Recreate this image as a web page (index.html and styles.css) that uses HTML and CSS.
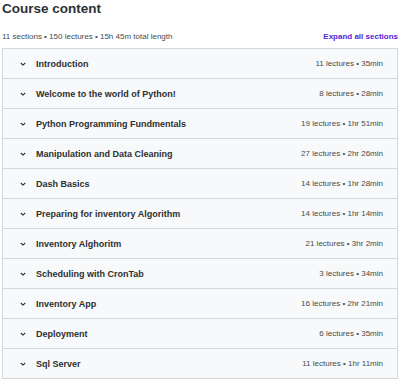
FILE: index.html
```html
<!DOCTYPE html>
<html lang="en">
<head>
<meta charset="UTF-8" />
<title>Course content</title>
<link rel="stylesheet" href="styles.css">
</head>
<body>
<main class="curriculum">
  <h2 class="title">Course content</h2>
  <div class="summary">
    <span>11 sections • 150 lectures • 15h 45m total length</span>
    <button class="expand" type="button">Expand all sections</button>
  </div>
  <div class="sections">
    <div class="section"><span class="chev"><svg width="8" height="8" viewBox="0 0 8 8"><path d="M1.8 3 4 5.1 6.2 3" /></svg></span><span class="name">Introduction</span><span class="meta">11 lectures • 35min</span></div>
    <div class="section"><span class="chev"><svg width="8" height="8" viewBox="0 0 8 8"><path d="M1.8 3 4 5.1 6.2 3" /></svg></span><span class="name">Welcome to the world of Python!</span><span class="meta">8 lectures • 28min</span></div>
    <div class="section"><span class="chev"><svg width="8" height="8" viewBox="0 0 8 8"><path d="M1.8 3 4 5.1 6.2 3" /></svg></span><span class="name">Python Programming Fundmentals</span><span class="meta">19 lectures • 1hr 51min</span></div>
    <div class="section"><span class="chev"><svg width="8" height="8" viewBox="0 0 8 8"><path d="M1.8 3 4 5.1 6.2 3" /></svg></span><span class="name">Manipulation and Data Cleaning</span><span class="meta">27 lectures • 2hr 26min</span></div>
    <div class="section"><span class="chev"><svg width="8" height="8" viewBox="0 0 8 8"><path d="M1.8 3 4 5.1 6.2 3" /></svg></span><span class="name">Dash Basics</span><span class="meta">14 lectures • 1hr 28min</span></div>
    <div class="section"><span class="chev"><svg width="8" height="8" viewBox="0 0 8 8"><path d="M1.8 3 4 5.1 6.2 3" /></svg></span><span class="name">Preparing for inventory Algorithm</span><span class="meta">14 lectures • 1hr 14min</span></div>
    <div class="section"><span class="chev"><svg width="8" height="8" viewBox="0 0 8 8"><path d="M1.8 3 4 5.1 6.2 3" /></svg></span><span class="name">Inventory Alghoritm</span><span class="meta">21 lectures • 3hr 2min</span></div>
    <div class="section"><span class="chev"><svg width="8" height="8" viewBox="0 0 8 8"><path d="M1.8 3 4 5.1 6.2 3" /></svg></span><span class="name">Scheduling with CronTab</span><span class="meta">3 lectures • 34min</span></div>
    <div class="section"><span class="chev"><svg width="8" height="8" viewBox="0 0 8 8"><path d="M1.8 3 4 5.1 6.2 3" /></svg></span><span class="name">Inventory App</span><span class="meta">16 lectures • 2hr 21min</span></div>
    <div class="section"><span class="chev"><svg width="8" height="8" viewBox="0 0 8 8"><path d="M1.8 3 4 5.1 6.2 3" /></svg></span><span class="name">Deployment</span><span class="meta">6 lectures • 35min</span></div>
    <div class="section"><span class="chev"><svg width="8" height="8" viewBox="0 0 8 8"><path d="M1.8 3 4 5.1 6.2 3" /></svg></span><span class="name">Sql Server</span><span class="meta">11 lectures • 1hr 11min</span></div>
  </div>
</main>
</body>
</html>
```

FILE: styles.css
```css
:root {
  --text-dark: #2d2f31;
  --text-muted: #474a4d;
  --row-bg: #f7f9fa;
  --row-border: #d1d7dc;
  --accent: #5624d0;
}
* {
  box-sizing: border-box;
}
body {
  margin: 0;
  font-family: 'Liberation Sans', Arial, sans-serif;
  color: var(--text-dark);
  background: #ffffff;
}
.curriculum {
  padding: 0 2px;
}
.title {
  margin: 0;
  font-size: 13.5px;
  line-height: 17px;
  font-weight: 700;
}
.summary {
  display: flex;
  justify-content: space-between;
  align-items: center;
  margin-top: 11px;
  height: 16px;
  font-size: 8px;
  color: var(--text-muted);
}
.expand {
  background: none;
  border: none;
  padding: 0;
  font-family: inherit;
  font-size: 8px;
  font-weight: 700;
  color: var(--accent);
  cursor: pointer;
}
.sections {
  margin-top: 4px;
  border: 1px solid var(--row-border);
  border-top: none;
}
.section {
  display: flex;
  align-items: center;
  height: 30px;
  padding: 0 14px 0 16px;
  background: var(--row-bg);
  border-top: 1px solid var(--row-border);
}
.chev {
  display: flex;
  width: 17px;
}
.chev svg {
  fill: none;
  stroke: var(--text-dark);
  stroke-width: 1.1;
}
.name {
  flex: 1;
  font-size: 9px;
  font-weight: 700;
}
.meta {
  font-size: 8px;
  color: var(--text-muted);
}
```
